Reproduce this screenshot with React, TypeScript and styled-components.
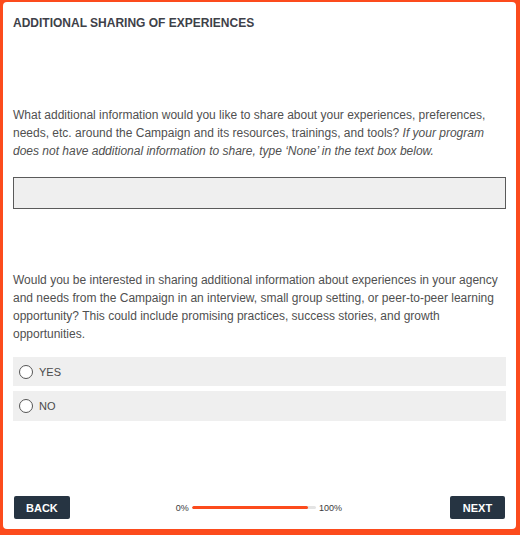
import styled, { createGlobalStyle } from "styled-components";

const GlobalStyle = createGlobalStyle`
    html, body {
        margin: 0;
        padding: 0;
        background-color: #fc4b1d;
    }
    #root {
        height: 535px;
        display: flex;
    }
`;

const Card = styled.form`
    flex: 1;
    margin: 2px 4px 6px 3px;
    padding: 12px 10px 10px 10px;
    background-color: #ffffff;
    border-radius: 4px;
    display: flex;
    flex-direction: column;
    font-family: "Liberation Sans", Arial, sans-serif;
    color: #505050;
`;

const Title = styled.h1`
    margin: 0;
    font-size: 12px;
    line-height: 18px;
    font-weight: 700;
    color: #3e4149;
`;

const Question = styled.p<{ $top: number }>`
    margin: ${(p) => p.$top}px 0 0 0;
    font-size: 12px;
    line-height: 18px;

    em {
        font-style: italic;
    }
`;

const TextBox = styled.input`
    margin-top: 17px;
    height: 32px;
    box-sizing: border-box;
    background-color: #efefef;
    border: 1px solid #5a5a5a;
    outline: none;
    padding: 5px 8px;
    font-size: 12px;
    font-family: inherit;
`;

const Options = styled.div`
    margin-top: 14px;
    display: flex;
    flex-direction: column;
    gap: 5px;
`;

const Option = styled.label<{ $height: number }>`
    height: ${(p) => p.$height}px;
    background-color: #efefef;
    display: flex;
    align-items: center;
    gap: 6px;
    padding-left: 6px;
    font-size: 11px;
    color: #4a4a4a;
    cursor: pointer;
`;

const Radio = styled.span`
    width: 12px;
    height: 12px;
    border: 1px solid #555;
    border-radius: 50%;
    background-color: #fff;
`;

const Footer = styled.div`
    margin-top: auto;
    display: flex;
    align-items: center;
    justify-content: space-between;
    padding: 0 1px;
`;

const Button = styled.button`
    height: 23px;
    min-width: 55px;
    padding: 0 12px;
    border: none;
    border-radius: 2px;
    background-color: #263442;
    color: #ffffff;
    font-family: "Liberation Sans", Arial, sans-serif;
    font-size: 11px;
    font-weight: 700;
    cursor: pointer;
`;

const Progress = styled.div`
    display: flex;
    align-items: center;
    gap: 3px;
    margin-left: -2px;
    font-size: 9px;
    color: #3a3a3a;
`;

const Track = styled.div`
    width: 124px;
    height: 3px;
    background-color: #e4e4e4;
    border-radius: 2px;
    overflow: hidden;
`;

const Fill = styled.div`
    height: 100%;
    background-color: #fc4b1d;
    border-radius: 2px;
`;

const options = [
    { label: "YES", height: 29 },
    { label: "NO", height: 30 },
];

function App() {
    const progress = 93.5;

    return (
        <>
            <GlobalStyle />
            <Card onSubmit={(e) => e.preventDefault()}>
                <Title>ADDITIONAL SHARING OF EXPERIENCES</Title>
                <Question $top={74}>
                    What additional information would you like to share about your experiences, preferences,
                    needs, etc. around the Campaign and its resources, trainings, and tools?{" "}
                    <em>If your program does not have additional information to share, type ‘None’ in the text box below.</em>
                </Question>
                <TextBox type="text" />
                <Question $top={62}>
                    Would you be interested in sharing additional information about experiences in your agency
                    and needs from the Campaign in an interview, small group setting, or peer-to-peer learning
                    opportunity? This could include promising practices, success stories, and growth
                    opportunities.
                </Question>
                <Options>
                    {options.map((o) => (
                        <Option key={o.label} $height={o.height}>
                            <Radio />
                            {o.label}
                        </Option>
                    ))}
                </Options>
                <Footer>
                    <Button type="button">BACK</Button>
                    <Progress>
                        <span>0%</span>
                        <Track>
                            <Fill style={{ width: `${progress}%` }} />
                        </Track>
                        <span>100%</span>
                    </Progress>
                    <Button type="submit">NEXT</Button>
                </Footer>
            </Card>
        </>
    );
}

export default App;
